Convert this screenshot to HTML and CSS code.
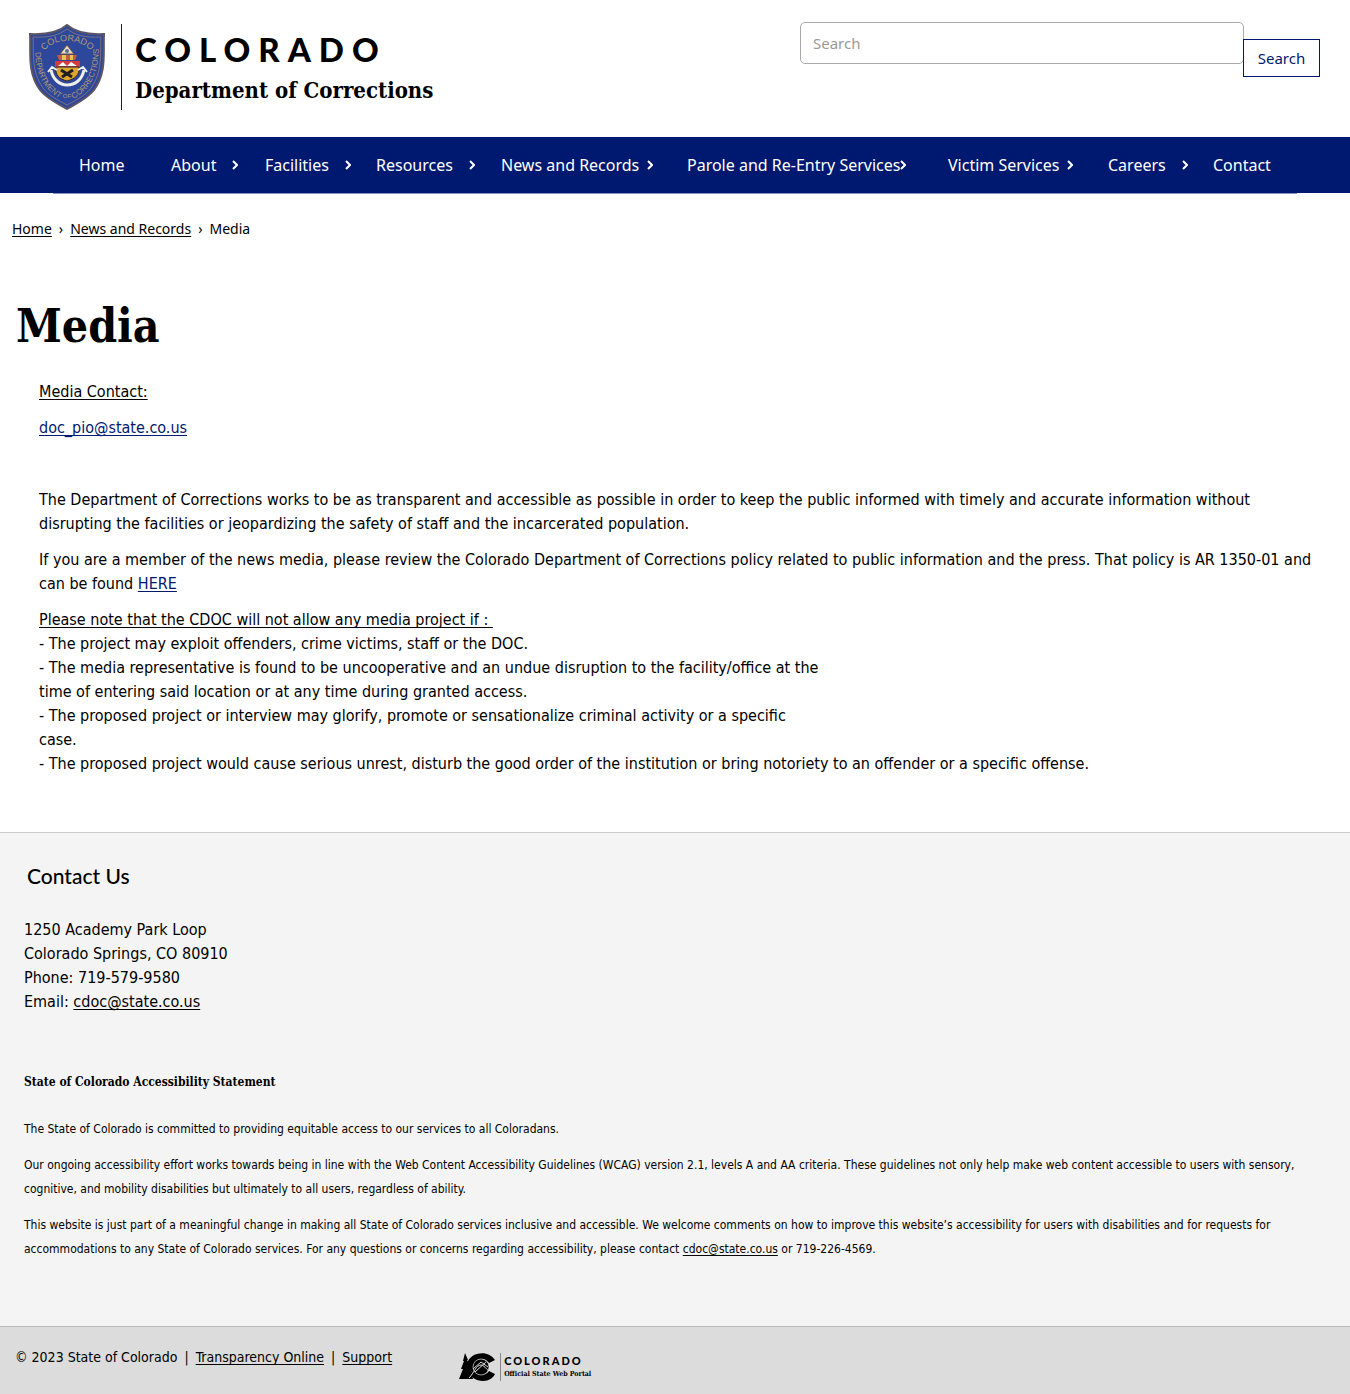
FILE: index.html
```html
<!DOCTYPE html>
<html lang="en">
<head>
<meta charset="utf-8">
<meta name="viewport" content="width=device-width, initial-scale=1">
<title>Media | Department of Corrections</title>
<link rel="stylesheet" href="styles.css">
</head>
<body>
<header class="site-header">
  <a class="brand" href="#">
    <svg class="shield" viewBox="0 0 76 86" width="76" height="86" aria-hidden="true">
      <defs>
        <path id="arc-top" d="M14 29 C22 13 54 13 63 29"/>
        <path id="arc-left" d="M6 25 C7 50 13 64 33 76"/>
        <path id="arc-right" d="M43 76 C63 64 69 50 70 23"/>
      </defs>
      <path d="M38 1C31 7 20 11 1 10C2 29-2 48 11 66C18 75 28 79 38 85C48 79 58 75 65 66C78 48 74 29 75 10C56 11 45 7 38 1Z" fill="#2d479b" stroke="#5b5566" stroke-width="2"/>
      <path d="M38 5C30 11 20 14 4 13C5 30 2 47 14 64C20 72 29 76 38 81C47 76 56 72 62 64C74 47 71 30 72 13C56 14 46 11 38 5Z" fill="none" stroke="#7e7180" stroke-width="1"/>
      <g class="shield-text">
        <text font-size="9"><textPath href="#arc-top" startOffset="50%" text-anchor="middle">COLORADO</textPath></text>
        <text font-size="8"><textPath href="#arc-left" startOffset="50%" text-anchor="middle">DEPARTMENT</textPath></text>
        <text font-size="8"><textPath href="#arc-right" startOffset="50%" text-anchor="middle">CORRECTIONS</textPath></text>
        <text x="38" y="74" font-size="6" text-anchor="middle">OF</text>
      </g>
      <path d="M38 21L45 30H31Z" fill="#e9dcc0" stroke="#6d4d45"/>
      <circle cx="38" cy="27" r="2" fill="#55739a"/>
      <path d="M28 31H48L46 36H30Z" fill="#c55b45"/><path d="M33 31H37V36H33ZM41 31H44V36H41Z" fill="#e8c34f"/>
      <path d="M26 37H51V43H26Z" fill="#d63b3d"/><path d="M29 42L34 38L38 42L42 38L48 42Z" fill="#fff"/>
      <path d="M27 43H50C51 51 46 55 38 57C30 55 26 51 27 43Z" fill="#dda62e" stroke="#292833"/>
      <path d="M32 46L43 53M44 46L33 53" stroke="#211e20" stroke-width="3"/>
      <path d="M22 46C24 56 31 61 38 61C46 61 53 56 55 46" fill="none" stroke="#f0eee9" stroke-width="3"/>
      <path d="M19 48L23 43L28 46M49 46L54 43L58 48" fill="none" stroke="#eee" stroke-width="2"/>
    </svg>
    <span class="brand-text"><span class="state">COLORADO</span><span class="department">Department of Corrections</span></span>
  </a>
  <form class="search" role="search">
    <input type="search" aria-label="Search" placeholder="Search">
    <button type="submit">Search</button>
  </form>
</header>
<nav class="main-nav" aria-label="Main">
  <ul>
    <li><a href="#">Home</a></li>
    <li><a href="#">About</a><svg class="chevron" viewBox="0 0 6 10"><path d="M1 1l4 4-4 4"/></svg></li>
    <li><a href="#">Facilities</a><svg class="chevron" viewBox="0 0 6 10"><path d="M1 1l4 4-4 4"/></svg></li>
    <li><a href="#">Resources</a><svg class="chevron" viewBox="0 0 6 10"><path d="M1 1l4 4-4 4"/></svg></li>
    <li class="snug"><a href="#">News and Records</a><svg class="chevron" viewBox="0 0 6 10"><path d="M1 1l4 4-4 4"/></svg></li>
    <li class="tight"><a href="#">Parole and Re-Entry Services</a><svg class="chevron" viewBox="0 0 6 10"><path d="M1 1l4 4-4 4"/></svg></li>
    <li class="snug"><a href="#">Victim Services</a><svg class="chevron" viewBox="0 0 6 10"><path d="M1 1l4 4-4 4"/></svg></li>
    <li><a href="#">Careers</a><svg class="chevron" viewBox="0 0 6 10"><path d="M1 1l4 4-4 4"/></svg></li>
    <li><a href="#">Contact</a></li>
  </ul>
</nav>
<nav class="breadcrumb" aria-label="Breadcrumb"><a href="#">Home</a><span>›</span><a href="#">News and Records</a><span>›</span><span>Media</span></nav>
<main>
  <h1>Media</h1>
  <div class="content">
    <p><u>Media Contact:</u></p>
    <p><a href="mailto:doc_pio@state.co.us">doc_pio@state.co.us</a></p>
    <p>&nbsp;</p>
    <p>The Department of Corrections works to be as transparent and accessible as possible in order to keep the public informed with timely and accurate information without disrupting the facilities or jeopardizing the safety of staff and the incarcerated population.</p>
    <p>If you are a member of the news media, please review the Colorado Department of Corrections policy related to public information and the press. That policy is AR 1350-01 and can be found <a href="#">HERE</a></p>
    <p><u>Please note that the CDOC will not allow any media project if :&nbsp;</u><br>
    - The project may exploit offenders, crime victims, staff or the DOC.<br>
    - The media representative is found to be uncooperative and an undue disruption to the facility/office at the<br>
    time of entering said location or at any time during granted access.<br>
    - The proposed project or interview may glorify, promote or sensationalize criminal activity or a specific<br>
    case.<br>
    - The proposed project would cause serious unrest, disturb the good order of the institution or bring notoriety to an offender or a specific offense.</p>
  </div>
</main>
<footer>
  <section class="contact">
    <h2>Contact Us</h2>
    <address>1250 Academy Park Loop<br>Colorado Springs, CO 80910<br>Phone: 719-579-9580<br>Email: <a href="mailto:cdoc@state.co.us">cdoc@state.co.us</a></address>
    <div class="statement">
      <h3>State of Colorado Accessibility Statement</h3>
      <p>The State of Colorado is committed to providing equitable access to our services to all Coloradans.</p>
      <p>Our ongoing accessibility effort works towards being in line with the Web Content Accessibility Guidelines (WCAG) version 2.1, levels A and AA criteria. These guidelines not only help make web content accessible to users with sensory, cognitive, and mobility disabilities but ultimately to all users, regardless of ability.</p>
      <p>This website is just part of a meaningful change in making all State of Colorado services inclusive and accessible. We welcome comments on how to improve this website’s accessibility for users with disabilities and for requests for accommodations to any State of Colorado services. For any questions or concerns regarding accessibility, please contact <a href="mailto:cdoc@state.co.us">cdoc@state.co.us</a> or 719-226-4569.</p>
    </div>
  </section>
  <div class="bottom-bar">
    <p class="legal">© 2023 State of Colorado <span>|</span> <a href="#">Transparency Online</a> <span>|</span> <a href="#">Support</a></p>
    <a class="portal" href="#">
      <svg viewBox="0 0 37 28" width="37" height="28" aria-hidden="true">
        <path d="M6 0L9 7L8 7L12 14L10 14L14 26H0L4 16L2 16L5 8L4 8Z"/>
        <path d="M36 7C32 1 25-1 18 1C10 3 7 10 8 16C10 24 17 28 24 28C30 28 34 25 36 21L30 18C28 21 25 22 22 21C15 20 13 13 17 9C20 5 27 5 30 10Z"/>
        <circle cx="22" cy="14" r="8"/>
        <path d="M10 25C15 20 17 12 22 12C25 12 27 16 30 18M14 16L22 9L29 14M16 19L27 9" fill="none" stroke="#dcdcdc" stroke-width="1"/>
        <circle cx="22" cy="14" r="8" fill="none" stroke="#dcdcdc" stroke-width=".7"/>
      </svg>
      <span class="portal-text"><span class="portal-state">COLORADO</span><span class="portal-name">Official State Web Portal</span></span>
    </a>
  </div>
</footer>
</body>
</html>
```
FILE: styles.css
```css
* { box-sizing: border-box; }
body { margin: 0; background: #fff; color: #000; font: 16px/24px "DejaVu Sans Condensed", "DejaVu Sans", sans-serif; }
p, h1, h2, h3, ul { margin: 0; }
a { color: inherit; }
a, u { text-underline-offset: 2px; text-decoration-skip-ink: none; }

.site-header { display: flex; justify-content: space-between; align-items: flex-start; padding: 22px 30px 27px; }
.brand { display: flex; gap: 16px; padding-top: 2px; text-decoration: none; }
.shield { display: block; margin-left: -1px; }
.shield-text { fill: #b39a72; font-family: "Liberation Sans Narrow", "Liberation Sans", sans-serif; }
.brand-text { display: flex; flex-direction: column; gap: 10px; border-left: 1px solid #222; padding: 7px 0 3px 13px; }
.state { font: 900 33px/36px Lato, sans-serif; letter-spacing: 8px; }
.department { font: bold 22px/26px "DejaVu Serif Condensed", "DejaVu Serif", serif; white-space: nowrap; }
.search { display: flex; width: 520px; }
.search input { flex: 1; min-width: 0; height: 42px; padding: 0 12px; border: 1px solid #aaa; border-radius: 5px; background: #fff; font: 15px/24px "Noto Sans", sans-serif; }
.search input::placeholder { color: #999; opacity: 1; }
.search button { width: 77px; height: 38px; margin: 17px 0 0 -1px; padding: 0; border: 1px solid #001970; background: #fff; color: #001970; font: 15px/24px "Noto Sans", sans-serif; }

.main-nav { background: #001970; padding: 0 53px; color: #fff; font-family: "Noto Sans", sans-serif; }
.main-nav ul { display: grid; grid-template-columns: 92fr 94fr 111fr 125fr 186fr 261fr 160fr 105fr 84fr; padding: 0 0 0 26px; box-shadow: 0 1px #8a90bd; list-style: none; }
.main-nav li { display: flex; align-items: center; gap: 16px; height: 56px; white-space: nowrap; }
.main-nav .snug { gap: 8px; }
.main-nav .tight { gap: 0; }
.main-nav a { text-decoration: none; }
.chevron { width: 6px; height: 10px; flex: none; fill: none; stroke: #fff; stroke-width: 2; }

.breadcrumb { display: flex; gap: 7px; padding: 24px 12px; font-family: "Noto Sans", sans-serif; font-size: 14px; }

h1 { padding: 31px 16px 24px; font: bold 46px/60px "DejaVu Serif Condensed", "DejaVu Serif", serif; }
.content { padding: 0 30px 56px 39px; }
.content p + p { margin-top: 12px; }
.content a { color: #001970; }

.contact { border-top: 1px solid #ccc; background: #f4f4f4; padding: 31px 24px 65px; }
h2 { padding: 0 3px; font: 500 21px/24px Lato, sans-serif; }
address { margin-top: 30px; font-style: normal; }
.statement { margin-top: 56px; font-size: 12px; }
h3 { margin-bottom: 23px; font: bold 12px/24px "DejaVu Serif Condensed", "DejaVu Serif", serif; }
.statement p + p { margin-top: 12px; }
.bottom-bar { display: flex; gap: 67px; border-top: 1px solid #bbb; background: #dcdcdc; padding: 18px 15px 13px; }
.legal { font-size: 14px; }
.legal span { margin: 0 3px; }
.portal { display: flex; gap: 4px; padding-top: 8px; text-decoration: none; }
.portal-text { display: flex; flex-direction: column; gap: 2px; border-left: 1px solid #888; padding: 2px 0 0 3px; }
.portal-state { font: 900 11px/12px Lato, sans-serif; letter-spacing: 2px; }
.portal-name { font: bold 7px/10px "DejaVu Serif Condensed", "DejaVu Serif", serif; white-space: nowrap; }
```
